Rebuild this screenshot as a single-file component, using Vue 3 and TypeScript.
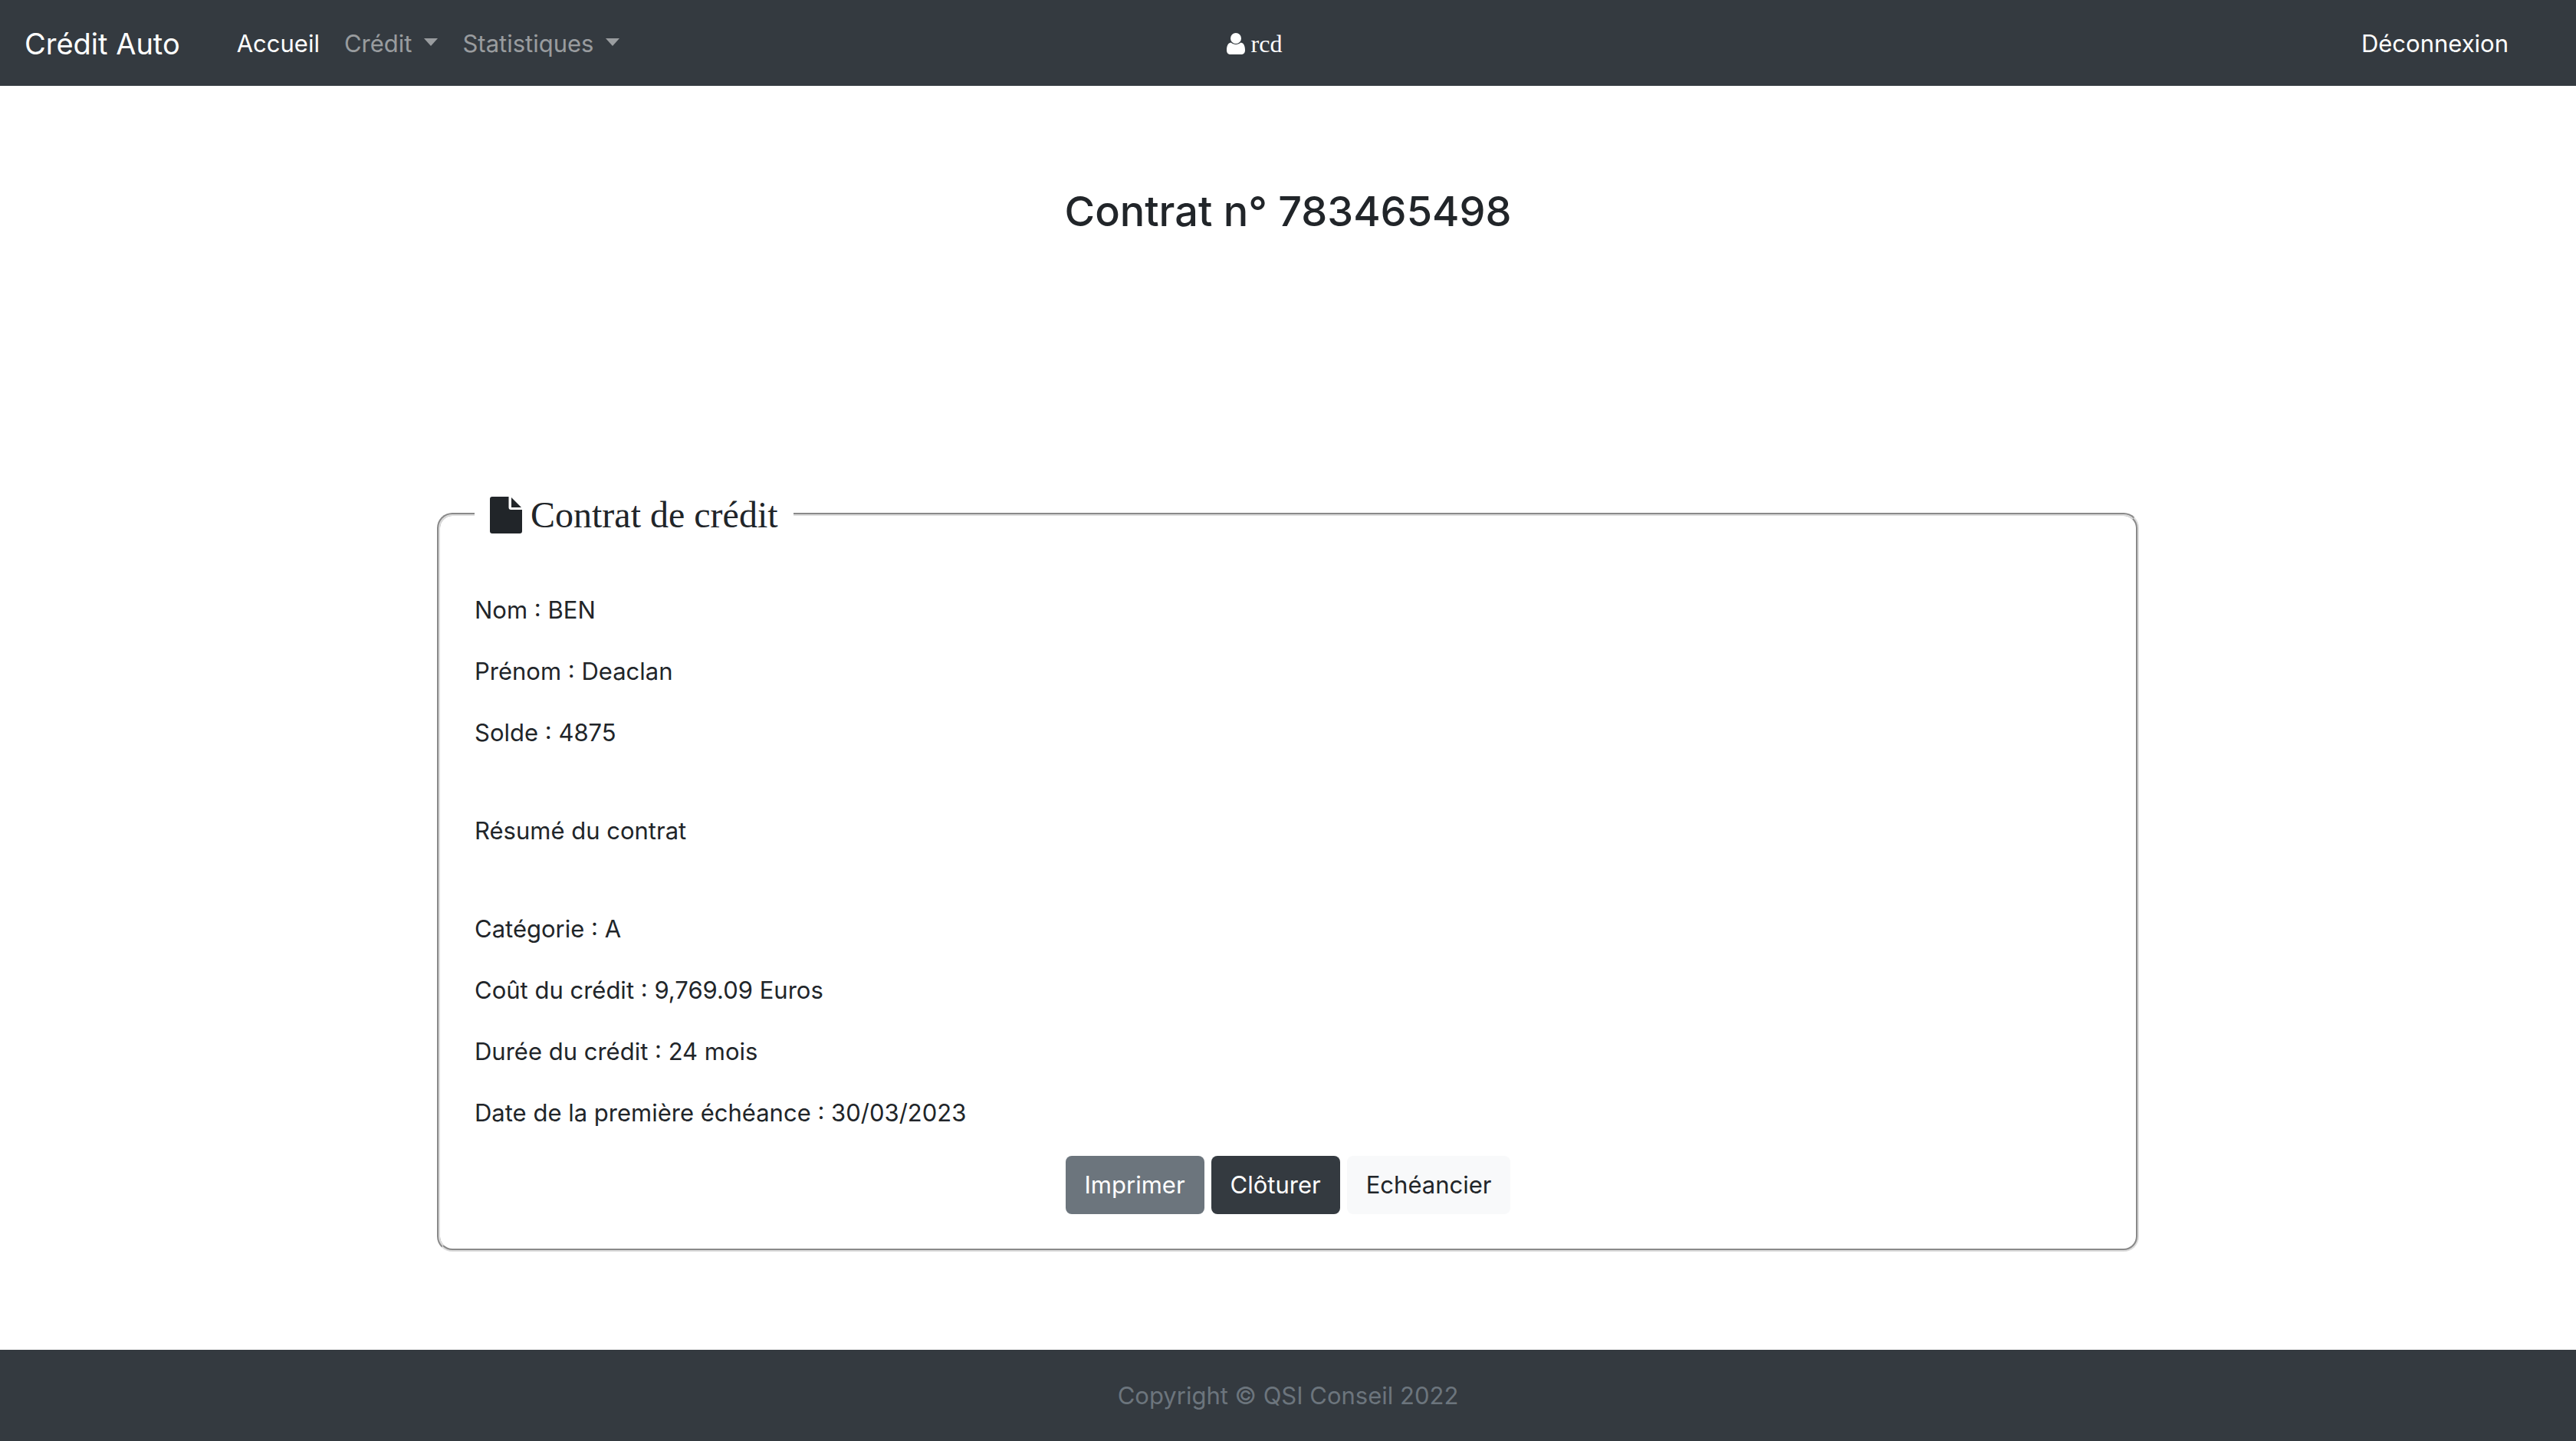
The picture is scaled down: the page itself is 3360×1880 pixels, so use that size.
<script setup lang="ts">
interface MenuItem {
  label: string
  active?: boolean
  dropdown?: boolean
}

const menu: MenuItem[] = [
  { label: 'Accueil', active: true },
  { label: 'Crédit', dropdown: true },
  { label: 'Statistiques', dropdown: true },
]

const user = 'rcd'
const contractNumber = '783465498'

const client: string[] = ['Nom : BEN', 'Prénom : Deaclan', 'Solde : 4875']

const summary: string[] = [
  'Catégorie : A',
  'Coût du crédit : 9,769.09 Euros',
  'Durée du crédit : 24 mois',
  'Date de la première échéance : 30/03/2023',
]

const actions = [
  { label: 'Imprimer', kind: 'secondary' },
  { label: 'Clôturer', kind: 'dark' },
  { label: 'Echéancier', kind: 'light' },
]
</script>

<template>
  <div class="page">
    <header class="navbar">
      <div class="nav-start">
        <a class="brand" href="#">Crédit Auto</a>
        <nav class="menu">
          <a
            v-for="item in menu"
            :key="item.label"
            href="#"
            class="nav-link"
            :class="{ active: item.active, dropdown: item.dropdown }"
          >{{ item.label }}</a>
        </nav>
      </div>
      <span class="user">
        <svg class="user-icon" viewBox="0 0 24 28" aria-hidden="true">
          <circle cx="12" cy="7" r="7" />
          <path d="M5.500 12.600C1.500 13.200 0 17.500 0 22.500C0 25.800 1.700 28 5 28H19C22.300 28 24 25.800 24 22.500C24 17.500 22.500 13.200 18.500 12.600C16.700 14.200 14.500 15 12 15C9.500 15 7.300 14.200 5.500 12.600Z" />
        </svg>
        <span>{{ user }}</span>
      </span>
      <a class="nav-link active logout" href="#">Déconnexion</a>
    </header>

    <main class="content">
      <h2 class="title">Contrat n° {{ contractNumber }}</h2>
      <fieldset class="card">
        <legend class="legend">
          <span class="legend-inner">
            <svg class="file-icon" viewBox="0 0 42 48" aria-hidden="true">
              <path d="M3 0H24.500V14C24.500 16 25.500 17 27.500 17H42V45C42 47 41 48 39 48H3C1 48 0 47 0 45V3C0 1 1 0 3 0Z" />
              <path d="M28 1L41 14H28Z" />
            </svg>
            <span>Contrat de crédit</span>
          </span>
        </legend>
        <p v-for="line in client" :key="line">{{ line }}</p>
        <p class="section">Résumé du contrat</p>
        <p v-for="line in summary" :key="line">{{ line }}</p>
        <div class="actions">
          <button v-for="a in actions" :key="a.label" type="button" class="btn" :class="a.kind">
            {{ a.label }}
          </button>
        </div>
      </fieldset>
    </main>

    <footer class="footer">Copyright © QSI Conseil 2022</footer>
  </div>
</template>

<style>
body {
  margin: 0;
  background: #fff;
}
</style>

<style scoped>
.page {
  min-height: 100vh;
  display: flex;
  flex-direction: column;
  font-family: Inter, "Liberation Sans", sans-serif;
  font-size: 31px;
  line-height: 48px;
  color: #212529;
}

.navbar {
  display: grid;
  grid-template-columns: 1fr auto 1fr;
  align-items: center;
  box-sizing: border-box;
  height: 112px;
  padding: 2px 88px 0 0;
  background: #343a40;
}

.nav-start {
  display: flex;
  align-items: center;
  gap: 74px;
  padding-left: 32px;
}

.brand {
  font-size: 38px;
  line-height: 60px;
  color: #fff;
  text-decoration: none;
}

.menu {
  display: flex;
  gap: 32px;
}

.nav-link {
  color: rgba(255, 255, 255, 0.5);
  text-decoration: none;
}

.nav-link.active {
  color: #fff;
}

.nav-link.dropdown::after {
  content: "";
  display: inline-block;
  margin-left: 16px;
  vertical-align: 8px;
  border-top: 10px solid;
  border-right: 9px solid transparent;
  border-left: 9px solid transparent;
}

.logout {
  justify-self: end;
}

.user {
  display: flex;
  align-items: center;
  gap: 8px;
  font-family: "Liberation Serif", serif;
  font-size: 32px;
  color: #fff;
}

.user-icon {
  width: 24px;
  height: 28px;
  fill: currentColor;
}

.content {
  flex: 1;
  display: flex;
  flex-direction: column;
  align-items: center;
  padding: 130px 32px 128px;
}

.title {
  margin: 0 0 324px;
  font-size: 54px;
  line-height: 68px;
  font-weight: 500;
}

.card {
  box-sizing: border-box;
  width: 100%;
  max-width: 2220px;
  min-width: 0;
  margin: 0;
  padding: 0 45px 45px;
  border: 4px groove #ddd;
  border-radius: 20px;
}

.legend {
  margin-bottom: 64px;
  padding: 2px 20px 0;
  font-family: "Liberation Serif", serif;
  font-size: 48px;
  line-height: 72px;
}

.legend-inner {
  display: flex;
  align-items: center;
  gap: 11px;
}

.file-icon {
  width: 42px;
  height: 48px;
  fill: currentColor;
}

p {
  margin: 0 0 32px;
}

.section {
  margin: 80px 0;
}

.actions {
  display: flex;
  justify-content: center;
  gap: 9px;
}

.btn {
  padding: 14px 25px;
  border: 0;
  border-radius: 8px;
  font: inherit;
}

.secondary {
  color: #fff;
  background: #6c757d;
}

.dark {
  color: #fff;
  background: #343a40;
}

.light {
  color: #212529;
  background: #f8f9fa;
}

.footer {
  padding: 36px 32px;
  text-align: center;
  color: #6c757d;
  background: #343a40;
}
</style>
